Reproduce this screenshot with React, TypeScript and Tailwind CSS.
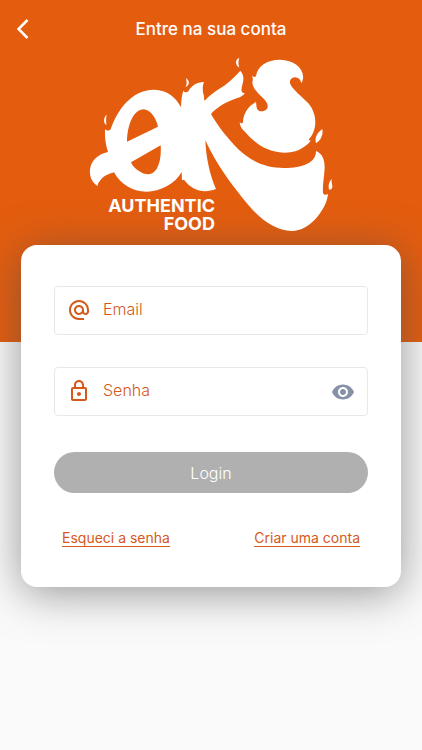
import type { FC, ReactNode } from 'react';
import { useState } from 'react';

import { MdAlternateEmail, MdOutlineLock, MdRemoveRedEye } from 'react-icons/md';

/** Brand mark with the flame lettering. */
const LogoMark: FC = () => (
  <svg viewBox="24 18 738 531" className="w-[246px]" fill="#fff" aria-hidden="true">
    <path
      fillRule="evenodd"
      d="M75 238C82 244 88 242 92 238C112 180 155 119 222 119C262 120 288 142 303 172
        C304 148 306 134 310 122C314 128 320 128 325 124C334 107 350 96 372 96
        C366 112 368 125 372 138C372 145 372 149 374 152C388 138 400 128 416 118
        C440 103 462 84 481 62C489 72 491 80 490 90C489 102 483 112 485 124
        C488 130 492 130 495 129C490 137 482 141 472 144C440 155 412 170 393 192
        C412 226 440 262 475 298C515 336 560 355 615 354C665 354 708 340 708 303
        C726 310 734 328 734 352C733 380 727 405 729 428C731 436 738 435 744 432
        C742 455 730 478 712 500C690 527 662 543 635 543C590 542 545 512 505 465
        C455 405 410 345 376 271C378 320 388 372 408 417C370 432 335 420 312 389
        C309 389 306 390 306 392L305 366C285 402 240 425 200 425C155 425 122 402 102 367
        C85 372 70 378 60 392C54 398 53 402 53 408C36 398 28 380 30 358
        C34 330 55 312 84 306C77 285 74 262 75 238Z
        M141 275C142 225 160 178 192 178C214 182 228 205 234 230Z
        M153 337L242 286C244 315 240 340 230 357C218 376 198 376 182 366
        C168 358 158 350 153 337Z"
    />
    <path
      d="M516 76C519 82 524 83 528 78C533 48 560 29 600 29C640 30 668 52 669 78
        C670 85 668 93 664 100C662 88 655 82 645 82C632 83 627 93 631 102
        C640 122 665 138 685 160C700 178 706 198 706 218C705 240 697 256 686 269L692 273
        C670 298 645 308 612 308C560 306 525 280 495 245C485 238 480 228 479 217
        C484 222 488 221 489 216C490 190 505 168 528 156C530 170 528 182 543 184
        C555 184 564 178 563 168C563 158 556 150 545 140C530 126 517 112 517 95
        C520 90 518 85 516 76Z"
    />
    <path d="M478 24C474 35 475 42 478 53C470 48 468 42 468 36C469 29 473 26 478 24Z" />
    <path d="M318 84C330 94 330 104 316 112C322 102 320 96 318 84Z" />
    <path d="M80 195C77 207 79 215 79 225C72 221 71 213 73 205C75 200 77 197 80 195Z" />
    <path d="M727 237C730 255 722 272 708 279C703 262 712 248 727 237Z" />
    <path d="M755 387C753 398 758 404 757 412C755 418 752 419 748 419C744 410 746 396 755 387Z" />
  </svg>
);

interface FormFieldProps {
  id: string;
  label: string;
  type: string;
  icon: ReactNode;
  action?: ReactNode;
}

const FormField: FC<FormFieldProps> = ({ id, label, type, icon, action }) => (
  <div className="flex h-[49px] items-center rounded-[4px] border border-[#e8e8ec] px-3">
    <label htmlFor={id} className="shrink-0 pb-0.5 text-[#d4591a]">
      {icon}
    </label>
    <input
      id={id}
      type={type}
      aria-label={label}
      placeholder={label}
      className="ml-3 min-w-0 flex-1 pb-1 text-base leading-6 text-[#d4591a] outline-none placeholder:font-light placeholder:text-[#d4591a]"
    />
    {action}
  </div>
);

/** Login page. */
const App: FC = () => {
  const [isPasswordVisible, setIsPasswordVisible] = useState(false);

  return (
    <div className="min-h-screen bg-[#fafafa] font-['Inter',sans-serif]">
      <header className="bg-[#e45d0f] pb-[97px]">
        <div className="grid h-14 grid-cols-[46px_1fr_46px] items-center pt-0.5">
          <button type="button" aria-label="Voltar" className="flex justify-center">
            <svg viewBox="0 0 12 20" className="h-5 w-3" fill="none" stroke="#fff" strokeWidth="2.5">
              <path d="M10.5 1L1.5 10L10.5 19" />
            </svg>
          </button>
          <h1 className="pt-0.5 text-center text-[17px] font-medium text-white">Entre na sua conta</h1>
        </div>
        {/* The brand stays above the card's shadow. */}
        <div className="relative z-10 grid justify-center">
          <LogoMark />
          <p className="-mt-9 mb-3 flex w-[127px] flex-col text-right text-lg leading-[18px] font-bold text-white">
            <span>AUTHENTIC</span>
            <span>FOOD</span>
          </p>
        </div>
      </header>

      <main className="relative mx-[21px] -mt-[97px] rounded-2xl bg-white px-[33px] pt-[41px] pb-[39px] shadow-[0_6px_44px_rgba(76,76,76,0.58)]">
        <form className="flex flex-col">
          <div className="flex flex-col gap-8">
            <FormField id="email" label="Email" type="email" icon={<MdAlternateEmail size={24} />} />
            <FormField
              id="password"
              label="Senha"
              type={isPasswordVisible ? 'text' : 'password'}
              icon={<MdOutlineLock size={24} />}
              action={(
                <button
                  type="button"
                  aria-label="Mostrar senha"
                  className="text-[#8791a5]"
                  onClick={() => setIsPasswordVisible(visible => !visible)}
                >
                  <MdRemoveRedEye size={24} />
                </button>
              )}
            />
          </div>
          <button type="submit" className="mt-9 h-[41px] rounded-full bg-[#b0b0b0] text-base font-light text-white">
            Login
          </button>
        </form>
        <nav className="mt-[35px] flex justify-between px-2 text-sm text-[#d4591a] underline underline-offset-3">
          <a href="#recuperar">Esqueci a senha</a>
          <a href="#cadastro">Criar uma conta</a>
        </nav>
      </main>
    </div>
  );
};

export default App;
